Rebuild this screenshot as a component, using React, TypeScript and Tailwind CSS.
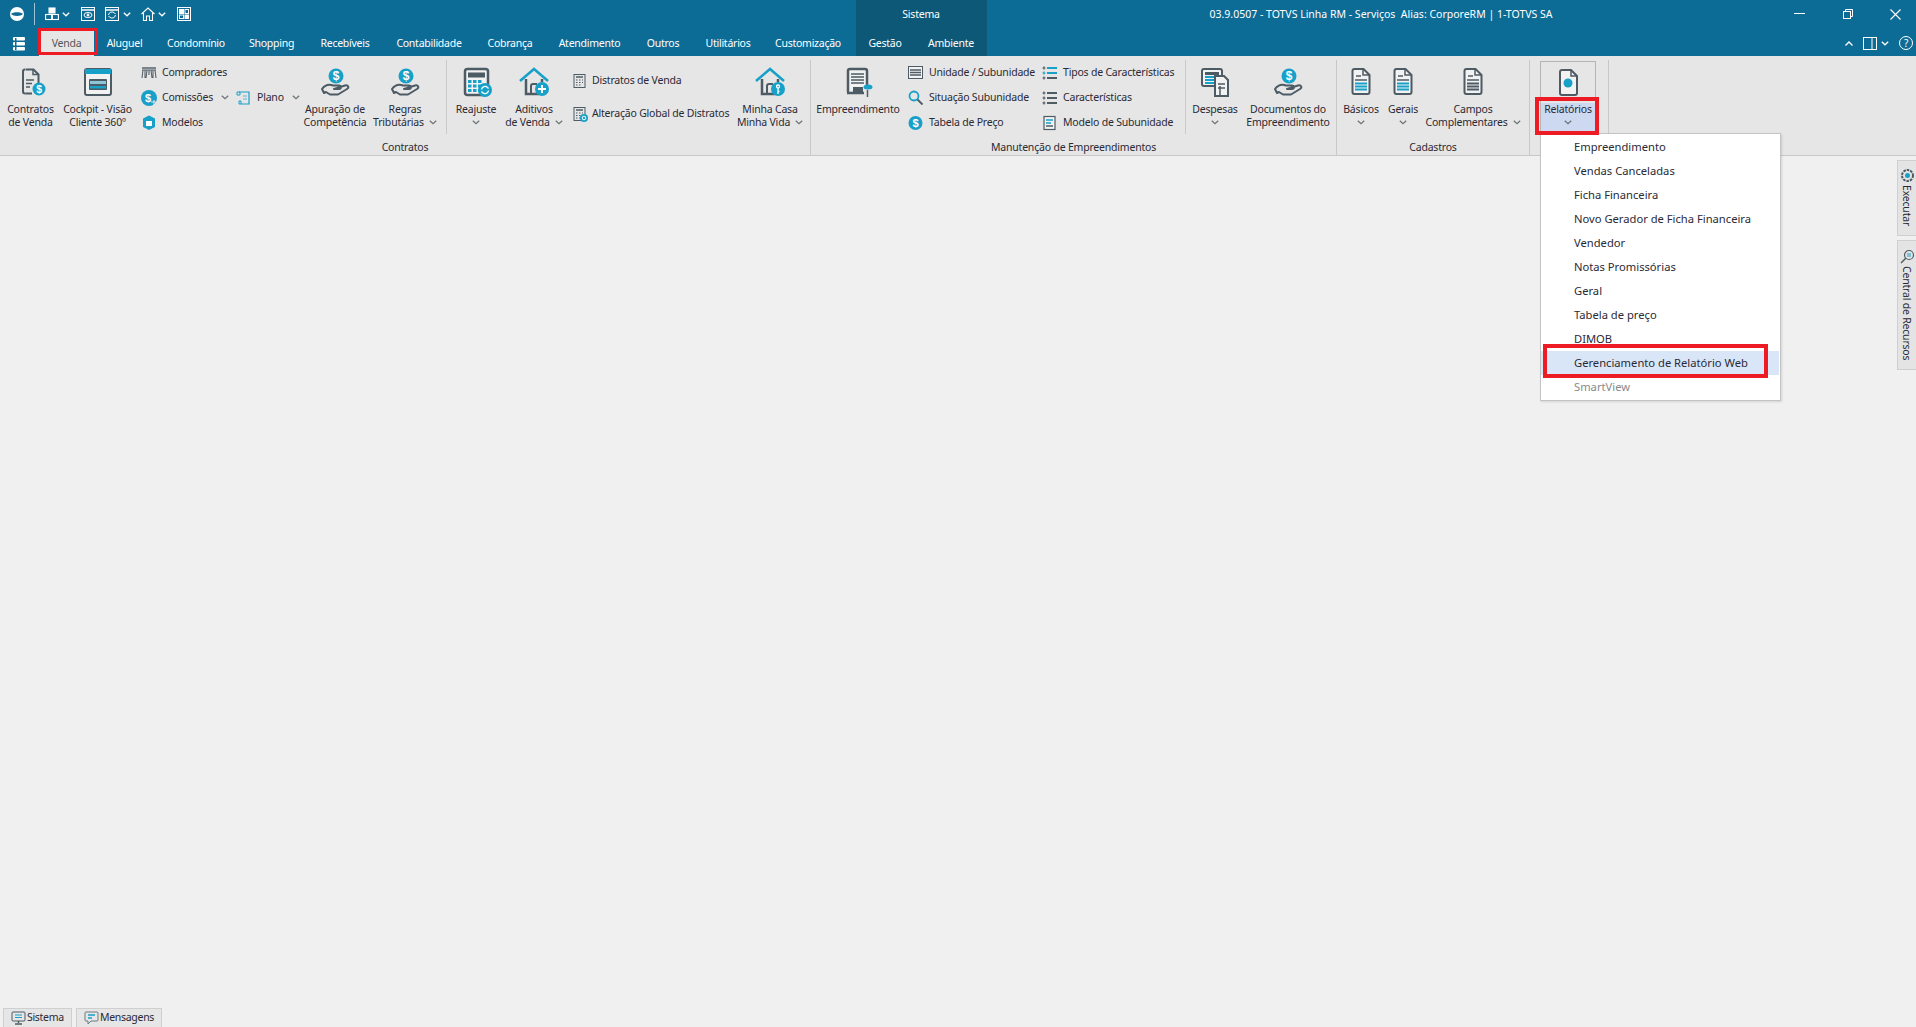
import type { ReactNode } from "react";

const G = "#4d5b64";
const T = "#17a0c8";

function Ico({ children, size = 32 }: { children: ReactNode; size?: number }) {
  return (
    <svg width={size} height={size} viewBox={`0 0 ${size} ${size}`} fill="none">
      {children}
    </svg>
  );
}

function Coin({ x, y, r = 6.5 }: { x: number; y: number; r?: number }) {
  return (
    <g>
      <circle cx={x} cy={y} r={r} fill={T} />
      <text x={x} y={y + r * 0.56} textAnchor="middle" fontSize={r * 1.6} fontWeight="700" fill="#fff" fontFamily="Liberation Sans, sans-serif">
        $
      </text>
    </g>
  );
}

function Doc({ lines = T }: { lines?: string }) {
  return (
    <g>
      <path d="M9.5 3h9l6 6v17a2 2 0 0 1-2 2h-13a2 2 0 0 1-2-2V5a2 2 0 0 1 2-2z" stroke={G} strokeWidth="2" fill="#f2f2f2" />
      <path d="M18 3v6h6" stroke={G} strokeWidth="1.5" />
      <path d="M11 10h5" stroke={G} strokeWidth="1.5" />
      <path d="M10 14h12" stroke={G} strokeWidth="1.5" />
      <path d="M10 17.5h12M10 20.5h12M10 23.5h12" stroke={lines} strokeWidth="2" />
    </g>
  );
}

function Hand() {
  return (
    <Ico>
      <Coin x={17} y={10} r={7.5} />
      <path d="M3 23c3-4 7-5 11-3.500h6c2.500 0 2.500 3.500 0 3.500h-5l11-3.500c3-1 4.500 2 2 3.500l-9 5.500h-8l-4-2.500-2 1z" stroke={G} strokeWidth="2" strokeLinejoin="round" />
    </Ico>
  );
}

function Calc({ badge }: { badge?: boolean }) {
  return (
    <Ico>
      <rect x="5" y="3" width="23" height="26" rx="2.500" stroke={G} strokeWidth="2.500" fill="#f2f2f2" />
      <rect x="8" y="6.500" width="17" height="5" fill={G} />
      {[14, 18.500, 23].map((y) =>
        [8, 13, 18].map((x) => <rect key={`${x}-${y}`} x={x} y={y} width="3.500" height="3" fill={T} />),
      )}
      {badge && (
        <g>
          <circle cx="25" cy="24" r="7" fill={T} />
          <path d="M21.500 23.500a3.500 3.500 0 0 1 6-2l1 1M28.500 24.500a3.500 3.500 0 0 1-6 2l-1-1" stroke="#fff" strokeWidth="1.300" />
        </g>
      )}
    </Ico>
  );
}

function House({ badge }: { badge: "plus" | "key" }) {
  return (
    <Ico>
      <path d="M8 13v15h13M24 13v3" stroke={G} strokeWidth="2.500" />
      <path d="M2 15L16 3l14 12" stroke={T} strokeWidth="2.500" />
      <path d="M13 28v-8a2 2 0 0 1 2-2h4" stroke={G} strokeWidth="2" />
      <circle cx="24" cy="23" r="7" fill={T} />
      {badge === "plus" ? (
        <path d="M24 19v8M20 23h8" stroke="#fff" strokeWidth="2" />
      ) : (
        <g stroke="#fff" strokeWidth="1.300">
          <circle cx="24" cy="20.500" r="1.500" />
          <path d="M24 22v6M24 25.500h1.500" />
        </g>
      )}
    </Ico>
  );
}

function DocCoin() {
  return (
    <Ico>
      <path d="M10.500 3.500h8l5 5V18M10.500 27.500H10a2 2 0 0 1-2-2v-20a2 2 0 0 1 2-2" stroke={G} strokeWidth="2" />
      <path d="M10.500 27.500H17" stroke={G} strokeWidth="2" />
      <path d="M18 3.500v5h5M11 14h8M11 17.500h6M11 21h4" stroke={G} strokeWidth="1.500" />
      <Coin x={24} y={23} />
    </Ico>
  );
}

function Cockpit() {
  return (
    <Ico>
      <rect x="3" y="3" width="26" height="26" rx="2" stroke={G} strokeWidth="2" fill="#f2f2f2" />
      <rect x="3" y="3" width="26" height="5" fill={T} />
      <rect x="7" y="13" width="18" height="11" rx="1" fill={G} />
      <rect x="8" y="15" width="16" height="3" fill="#8fc4d8" />
      <rect x="8" y="20" width="16" height="2.500" fill={T} />
    </Ico>
  );
}

function Building() {
  return (
    <Ico>
      <path d="M6 26V5a2 2 0 0 1 2-2h15a2 2 0 0 1 2 2v14" stroke={G} strokeWidth="2.500" fill="#f2f2f2" />
      <path d="M9 8h13M9 11h13M9 14h13M9 17h13" stroke={G} strokeWidth="1.500" />
      <path d="M5 27h17" stroke={G} strokeWidth="2.500" />
      <rect x="11" y="21" width="10" height="5" fill={G} />
      <path d="M25.500 24v7" stroke={G} strokeWidth="1.500" />
      <ellipse cx="26" cy="21" rx="4.500" ry="2.500" fill={T} />
    </Ico>
  );
}

function DespesasIcon() {
  return (
    <Ico>
      <rect x="3" y="3" width="20" height="17" rx="2" stroke={G} strokeWidth="2" fill="#f2f2f2" />
      <rect x="6" y="6" width="14" height="3" fill={G} />
      <path d="M6 11h14M6 14h14M6 17h9" stroke={T} strokeWidth="2" />
      <path d="M16 10h9l4 4v16H16z" stroke={G} strokeWidth="2" fill="#f2f2f2" />
      <path d="M19 18h7M19 22h7M21 20v9" stroke={G} strokeWidth="1.500" />
    </Ico>
  );
}

function ReportIcon() {
  return (
    <Ico>
      <path d="M10 4h9l6 6v17a2 2 0 0 1-2 2H10a2 2 0 0 1-2-2V6a2 2 0 0 1 2-2z" stroke={G} strokeWidth="2" fill="#f2f2f2" />
      <path d="M19 4v6h6" stroke={G} strokeWidth="1.500" />
      <circle cx="16" cy="17" r="4.500" fill={T} />
    </Ico>
  );
}

function SmallCalc({ badge }: { badge?: boolean }) {
  return (
    <Ico size={16}>
      <rect x="2" y="1.500" width="11" height="13" stroke={G} strokeWidth="1" />
      <path d="M4 4h7" stroke={G} strokeWidth="1.500" />
      <path d="M4 7h1.500M7 7h1.500M10 7h1M4 9.500h1.500M7 9.500h1.500M10 9.500h1M4 12h1.500M7 12h1.500" stroke={G} strokeWidth="1.200" />
      {badge && (
        <g>
          <circle cx="12" cy="12" r="4" fill={T} />
          <circle cx="12" cy="12" r="1.800" stroke="#fff" strokeWidth="1" />
        </g>
      )}
    </Ico>
  );
}

function ListIcon({ accent }: { accent?: boolean }) {
  const c = accent ? T : G;
  return (
    <Ico size={16}>
      <path d="M5 3h10" stroke={c} strokeWidth="2" />
      <path d="M5 8h10" stroke={c} strokeWidth="2" />
      <path d="M5 13h10" stroke={G} strokeWidth="2" />
      <path d="M2 1.500v3M.5 3h3M2 11.500v3M.5 13h3" stroke={G} strokeWidth="1.200" />
      <path d="M2 6.500v3M.5 8h3" stroke={c} strokeWidth="1.200" />
    </Ico>
  );
}

function SmallIcon({ name }: { name: string }) {
  if (name === "compradores")
    return (
      <Ico size={16}>
        <path d="M1 5h14M2 5l-1 8M6 5l-1 8M10 5l1 8M14 5l1 8M4 5v8M12 5v8M8 5v5" stroke="#56636b" strokeWidth="1.100" />
        <path d="M1 3h14" stroke="#56636b" strokeWidth="1.500" />
      </Ico>
    );
  if (name === "comissoes")
    return (
      <Ico size={16}>
        <circle cx="8" cy="8" r="8" fill={T} />
        <text x="7" y="12" textAnchor="middle" fontSize="11" fontWeight="700" fill="#fff" fontFamily="Liberation Sans, sans-serif">
          $
        </text>
        <path d="M10 12h6M13 10v5" stroke="#e6e6e6" strokeWidth="1" />
      </Ico>
    );
  if (name === "modelos")
    return (
      <Ico size={16}>
        <path d="M8 .5l6 3v8.500l-6 3-6-3V3.500z" fill={T} />
        <path d="M5 6h6v5H5z" fill="#fff" />
      </Ico>
    );
  if (name === "plano")
    return (
      <Ico size={16}>
        <path d="M3 2h10v12H5" stroke={T} strokeWidth="1.200" />
        <path d="M1 2h3v3H1zM3 14h2v-3H3z" stroke={T} strokeWidth="1" />
        <path d="M7 6h4M7 9h4" stroke="#8fc4d8" strokeWidth="1.500" />
      </Ico>
    );
  if (name === "unidade")
    return (
      <Ico size={16}>
        <rect x=".5" y="1.500" width="14" height="12" stroke={G} strokeWidth="1" fill="#f2f2f2" />
        <path d="M2 5h11M2 7.500h11M2 10h11" stroke={G} strokeWidth="1.300" />
      </Ico>
    );
  if (name === "situacao")
    return (
      <Ico size={16}>
        <circle cx="6" cy="6" r="4.500" stroke={T} strokeWidth="1.800" />
        <path d="M9.500 9.500l5 5" stroke={G} strokeWidth="1.800" />
      </Ico>
    );
  if (name === "tabela")
    return (
      <Ico size={16}>
        <Coin x={7.5} y={8} r={7} />
      </Ico>
    );
  if (name === "modelo")
    return (
      <Ico size={16}>
        <rect x="2" y="1.500" width="11" height="13" stroke={G} strokeWidth="1.200" fill="#f2f2f2" />
        <path d="M4 5h7M4 8h5" stroke={T} strokeWidth="1.500" />
        <path d="M4 11h7" stroke={G} strokeWidth="1.500" />
      </Ico>
    );
  if (name === "tipos") return <ListIcon accent />;
  if (name === "caract") return <ListIcon />;
  if (name === "distratos") return <SmallCalc />;
  return <SmallCalc badge />;
}

function Chevron({ className = "" }: { className?: string }) {
  return (
    <svg width="8" height="5" viewBox="0 0 8 5" fill="none" className={`shrink-0 ${className}`}>
      <path d="M.8.8L4 3.800 7.200.8" stroke="#6b7378" strokeWidth="1.200" />
    </svg>
  );
}

function WhiteChevron({ up }: { up?: boolean }) {
  return (
    <svg width="8" height="5" viewBox="0 0 8 5" fill="none">
      <path d={up ? "M.5 4.500L4 1l3.500 3.500" : "M.8.8L4 3.800 7.200.8"} stroke="#fff" strokeWidth="1.300" />
    </svg>
  );
}

function Large({
  w,
  icon,
  l1,
  l2,
  chevron,
}: {
  w: string;
  icon: ReactNode;
  l1: string;
  l2?: string;
  chevron?: boolean;
}) {
  return (
    <div className={`${w} shrink-0 flex flex-col items-center pt-[6px]`}>
      <div className="h-8 w-8">{icon}</div>
      <div className="mt-[5px] text-center leading-[13px] whitespace-nowrap">
        <div>{l1}</div>
        {l2 && (
          <div className="flex items-center justify-center gap-[5px]">
            {l2}
            {chevron && <Chevron />}
          </div>
        )}
        {!l2 && chevron && (
          <div className="flex h-[13px] items-center justify-center">
            <Chevron />
          </div>
        )}
      </div>
    </div>
  );
}

function Small({ icon, label, chevron }: { icon: string; label: string; chevron?: boolean }) {
  return (
    <div className="flex h-[25px] items-center gap-[5px] whitespace-nowrap">
      <div className="h-4 w-4 shrink-0">
        <SmallIcon name={icon} />
      </div>
      {label}
      {chevron && <Chevron className="ml-[3px]" />}
    </div>
  );
}

function Group({ w, label, children }: { w: string; label: string; children: ReactNode }) {
  return (
    <div className={`${w} shrink-0 border-r border-[#c8c8c8] flex flex-col`}>
      <div className="flex h-[74px]">{children}</div>
      <div className="pt-[6px] text-center leading-[14px]">{label}</div>
    </div>
  );
}

function Sep() {
  return <div className="w-px h-[74px] bg-[#cacaca] shrink-0" />;
}

const tabs = [
  { label: "Aluguel", w: "w-[61px]" },
  { label: "Condomínio", w: "w-[82px]" },
  { label: "Shopping", w: "w-[69px]" },
  { label: "Recebíveis", w: "w-[78px]" },
  { label: "Contabilidade", w: "w-[90px]" },
  { label: "Cobrança", w: "w-[72px]" },
  { label: "Atendimento", w: "w-[87px]" },
  { label: "Outros", w: "w-[60px]" },
  { label: "Utilitários", w: "w-[70px]" },
  { label: "Customização", w: "w-[90px]" },
  { label: "Gestão", w: "w-[64px]" },
  { label: "Ambiente", w: "w-[68px]" },
];

const menu = [
  "Empreendimento",
  "Vendas Canceladas",
  "Ficha Financeira",
  "Novo Gerador de Ficha Financeira",
  "Vendedor",
  "Notas Promissórias",
  "Geral",
  "Tabela de preço",
  "DIMOB",
];

export default function App() {
  return (
    <div
      className="relative flex h-screen flex-col overflow-hidden bg-[#f0f0f0] text-[10.5px] tracking-[-0.2px] text-[#2a2a35]"
      style={{ fontFamily: '"Noto Sans", sans-serif' }}
    >
      <header className="relative h-[56px] shrink-0 bg-[#0d6c96] text-white">
        <div className="absolute left-[856px] top-0 h-[56px] w-[131px] bg-[#0d5876]" />
        <div className="relative flex h-[28px] items-center">
          <div className="ml-[10px] flex items-center gap-[10px]">
            <svg width="14" height="14" viewBox="0 0 14 14">
              <circle cx="7" cy="7" r="7" fill="#fff" />
              <path d="M1 7c2-2.500 10-2.500 12 0-2 2.500-10 2.500-12 0z" fill="#0d6c96" />
            </svg>
            <div className="h-[22px] w-px bg-[#9cc4d6]" />
          </div>
          <div className="ml-[10px] flex items-center gap-[3px]">
            <svg width="14" height="14" viewBox="0 0 14 14" fill="none" stroke="#fff" strokeWidth="1.100">
              <rect x="4" y="1" width="6" height="5" fill="#fff" />
              <rect x=".6" y="7.500" width="6" height="5" />
              <rect x="7.400" y="7.500" width="6" height="5" />
            </svg>
            <WhiteChevron />
          </div>
          <svg className="ml-[11px]" width="14" height="14" viewBox="0 0 14 14" fill="none" stroke="#fff">
            <rect x=".5" y=".5" width="13" height="13" />
            <path d="M1 3h12" strokeWidth="1.500" />
            <ellipse cx="7" cy="8" rx="4" ry="2.500" />
            <circle cx="7" cy="8" r="1" fill="#fff" />
          </svg>
          <div className="ml-[10px] flex items-center gap-[4px]">
            <svg width="14" height="14" viewBox="0 0 14 14" fill="none" stroke="#fff">
              <rect x=".5" y=".5" width="13" height="13" />
              <path d="M1 3h12" strokeWidth="1.500" />
              <path d="M3.500 8a3.500 3.500 0 0 1 6-2l1 1M10.500 8a3.500 3.500 0 0 1-6 2l-1-1" />
            </svg>
            <WhiteChevron />
          </div>
          <div className="ml-[10px] flex items-center gap-[3px]">
            <svg width="14" height="14" viewBox="0 0 14 14" fill="none" stroke="#fff" strokeWidth="1.100">
              <path d="M.5 7L7 1l6.500 6M2.500 6v7.500h3V9h3v4.500h3V6" />
            </svg>
            <WhiteChevron />
          </div>
          <svg className="ml-[11px]" width="14" height="14" viewBox="0 0 14 14" fill="none" stroke="#fff">
            <rect x=".5" y=".5" width="13" height="13" />
            <rect x="2.500" y="2.500" width="4" height="4" fill="#fff" />
            <rect x="8" y="2.500" width="3.500" height="4" />
            <rect x="2.500" y="8" width="4" height="3.500" />
            <rect x="8" y="8" width="3.500" height="3.500" fill="#fff" />
          </svg>
          <span className="absolute left-[921px] top-[15px] -translate-x-1/2 -translate-y-1/2">Sistema</span>
          <span className="absolute left-[1381px] top-[15px] -translate-x-1/2 -translate-y-1/2 whitespace-pre tracking-normal">
            03.9.0507 - TOTVS Linha RM - Serviços{"  "}Alias: CorporeRM | 1-TOTVS SA
          </span>
          <div className="ml-auto flex items-center">
            <svg className="mr-[38px]" width="11" height="2" viewBox="0 0 11 2">
              <rect width="11" height="1" fill="#fff" />
            </svg>
            <svg className="mr-[37px]" width="10" height="10" viewBox="0 0 10 10" fill="none" stroke="#fff">
              <rect x=".5" y="2.500" width="7" height="7" />
              <path d="M2.500 2.500v-2h7v7h-2" />
            </svg>
            <svg className="mr-[15px]" width="11" height="11" viewBox="0 0 11 11" stroke="#fff" strokeWidth="1.100">
              <path d="M.5.5l10 10M10.500.5l-10 10" />
            </svg>
          </div>
        </div>
        <div className="relative flex h-[28px] items-end tracking-[-0.25px]">
          <svg className="ml-[13px] mb-[5px]" width="12" height="14" viewBox="0 0 12 14" fill="#fff">
            <rect x="0" y="0" width="12" height="3.600" rx="1" />
            <rect x="0" y="5" width="12" height="3.600" rx="1" />
            <rect x="0" y="10" width="12" height="3.600" rx="1" />
            <rect x="2" y="1" width="1.500" height="12" fill="#0d6c96" />
          </svg>
          <div className="ml-[14px] flex h-[25px] w-[55px] items-center justify-center bg-[#e6e6e6] text-[#555]">Venda</div>
          {tabs.map((t) => (
            <div key={t.label} className={`${t.w} flex h-[25px] items-center justify-center`}>
              {t.label}
            </div>
          ))}
          <div className="absolute right-[3px] top-[8px] flex items-center">
            <WhiteChevron up />
            <svg className="ml-[10px]" width="14" height="13" viewBox="0 0 14 13" fill="none" stroke="#fff">
              <rect x=".5" y=".5" width="13" height="12" />
              <path d="M9 0v13" />
            </svg>
            <div className="ml-[4px]">
              <WhiteChevron />
            </div>
            <div className="ml-[10px] flex h-[14px] w-[14px] items-center justify-center rounded-full border border-white text-[10px] leading-none">
              ?
            </div>
          </div>
        </div>
      </header>

      <div className="flex h-[100px] shrink-0 border-b border-[#c8c8c8] bg-[#e6e6e6] pt-[4px]">
        <Group w="w-[811px]" label="Contratos">
          <Large w="w-[61px]" icon={<DocCoin />} l1="Contratos" l2="de Venda" />
          <Large w="w-[73px]" icon={<Cockpit />} l1="Cockpit - Visão" l2="Cliente 360º" />
          <div className="w-[97px] shrink-0 pl-[7px]">
            <Small icon="compradores" label="Compradores" />
            <Small icon="comissoes" label="Comissões" chevron />
            <Small icon="modelos" label="Modelos" />
          </div>
          <div className="w-[70px] shrink-0 pt-[25px] pl-[5px]">
            <Small icon="plano" label="Plano" chevron />
          </div>
          <Large w="w-[68px]" icon={<Hand />} l1="Apuração de" l2="Competência" />
          <Large w="w-[72px]" icon={<Hand />} l1="Regras" l2="Tributárias" chevron />
          <div className="w-[5px] shrink-0" />
          <Sep />
          <Large w="w-[58px]" icon={<Calc badge />} l1="Reajuste" chevron />
          <Large w="w-[58px]" icon={<House badge="plus" />} l1="Aditivos" l2="de Venda" chevron />
          <div className="flex w-[172px] shrink-0 flex-col pl-[9px] pt-[4px]">
            <div className="flex h-[33px] items-center gap-[4px]">
              <div className="h-4 w-4"><SmallIcon name="distratos" /></div>
              Distratos de Venda
            </div>
            <div className="flex h-[33px] items-center gap-[4px] whitespace-nowrap">
              <div className="h-4 w-4"><SmallIcon name="alteracao" /></div>
              Alteração Global de Distratos
            </div>
          </div>
          <Large w="w-[70px]" icon={<House badge="key" />} l1="Minha Casa" l2="Minha Vida" chevron />
        </Group>
        <Group w="w-[526px]" label="Manutenção de Empreendimentos">
          <Large w="w-[94px]" icon={<Building />} l1="Empreendimento" />
          <div className="w-[134px] shrink-0 pl-[3px]">
            <Small icon="unidade" label="Unidade / Subunidade" />
            <Small icon="situacao" label="Situação Subunidade" />
            <Small icon="tabela" label="Tabela de Preço" />
          </div>
          <div className="w-[146px] shrink-0 pl-[3px]">
            <Small icon="tipos" label="Tipos de Características" />
            <Small icon="caract" label="Características" />
            <Small icon="modelo" label="Modelo de Subunidade" />
          </div>
          <Sep />
          <Large w="w-[58px]" icon={<DespesasIcon />} l1="Despesas" chevron />
          <Large w="w-[88px]" icon={<Hand />} l1="Documentos do" l2="Empreendimento" />
        </Group>
        <Group w="w-[193px]" label="Cadastros">
          <Large w="w-[48px]" icon={<Ico><Doc /></Ico>} l1="Básicos" chevron />
          <Large w="w-[36px]" icon={<Ico><Doc /></Ico>} l1="Gerais" chevron />
          <Large w="w-[104px]" icon={<Ico><Doc lines={G} /></Ico>} l1="Campos" l2="Complementares" chevron />
        </Group>
        <Group w="w-[79px]" label="">
          <div className="ml-[10px] mt-[1px] flex h-[73px] w-[56px] flex-col items-center border border-[#b4b4b4]">
            <div className="h-[41px] pt-[4px]">
              <ReportIcon />
            </div>
            <div className="flex w-full flex-1 flex-col items-center bg-[#ccd9f1] leading-[13px]">
              <span>Relatórios</span>
              <div className="flex h-[13px] items-center">
                <Chevron />
              </div>
            </div>
          </div>
        </Group>
      </div>

      <main className="flex flex-1 justify-end pt-[4px]">
        <div className="flex w-[19px] flex-col gap-[4px]">
          <div className="flex h-[76px] flex-col items-center border border-r-0 border-[#cfcfcf] bg-[#e4e4e4] pt-[7px]">
            <svg width="15" height="15" viewBox="0 0 15 15" className="mb-[2px] shrink-0">
              <circle cx="7.500" cy="7.500" r="5.500" fill="none" stroke="#4d5b64" strokeWidth="2" strokeDasharray="2.500 1" />
              <circle cx="7.500" cy="7.500" r="2.500" fill={T} />
            </svg>
            <span className="[writing-mode:vertical-rl] leading-[14px]">Executar</span>
          </div>
          <div className="flex h-[130px] flex-col items-center border border-r-0 border-[#cfcfcf] bg-[#e4e4e4] pt-[8px]">
            <svg width="15" height="15" viewBox="0 0 15 15" fill="none" className="mb-[2px] shrink-0">
              <circle cx="9" cy="6" r="4.500" stroke="#4d5b64" strokeWidth="1.200" />
              <path d="M7 5h4M7 7h4" stroke={T} />
              <path d="M6 9l-5 5" stroke="#4d5b64" strokeWidth="1.500" />
            </svg>
            <span className="whitespace-nowrap [writing-mode:vertical-rl] leading-[14px]">Central de Recursos</span>
          </div>
        </div>
      </main>

      <footer className="flex h-[19px] shrink-0 items-end gap-[4px] pl-[3px] tracking-[-0.3px]">
        <div className="flex h-[19px] w-[69px] items-center gap-[1px] border border-b-0 border-[#cfcfcf] bg-[#e6e6e6] pl-[7px]">
          <svg width="15" height="14" viewBox="0 0 15 14" fill="none" stroke="#4d5b64">
            <rect x="1" y="1" width="13" height="9" rx="1" />
            <path d="M4 4h7M4 6.500h7" stroke={T} />
            <path d="M7.500 10v2M4 13h7" strokeWidth="1.500" />
          </svg>
          Sistema
        </div>
        <div className="flex h-[19px] w-[86px] items-center gap-[1px] border border-b-0 border-[#cfcfcf] bg-[#e6e6e6] pl-[7px]">
          <svg width="15" height="14" viewBox="0 0 15 14" fill="none" stroke="#6b7a82">
            <path d="M2 1h11a1 1 0 0 1 1 1v7a1 1 0 0 1-1 1H7l-3 3v-3H2a1 1 0 0 1-1-1V2a1 1 0 0 1 1-1z" />
            <path d="M4 4h7M4 7h4" stroke={T} strokeWidth="1.500" />
          </svg>
          Mensagens
        </div>
      </footer>

      {/* menu aberto de Relatórios */}
      <div className="absolute left-[1540px] top-[133px] w-[241px] border border-[#c4c4c4] bg-white py-px text-[11.2px] tracking-normal shadow-[1px_1px_2px_rgba(0,0,0,0.12)]">
        {menu.map((m) => (
          <div key={m} className="flex h-[24px] items-center pl-[33px]">
            {m}
          </div>
        ))}
        <div className="mr-px flex h-[24px] items-center bg-[#d9e6f8] pl-[33px]">Gerenciamento de Relatório Web</div>
        <div className="flex h-[24px] items-center pl-[33px] text-[#8a8a8a]">SmartView</div>
      </div>

      {/* marcações em vermelho */}
      <div className="pointer-events-none absolute left-[38px] top-[28px] h-[27px] w-[60px] border-[3px] border-[#ed1c24]" />
      <div className="pointer-events-none absolute left-[1535px] top-[97px] h-[38px] w-[64px] border-[4px] border-[#ed1c24]" />
      <div className="pointer-events-none absolute left-[1543px] top-[344px] h-[34px] w-[225px] border-[4px] border-[#ed1c24]" />
    </div>
  );
}
